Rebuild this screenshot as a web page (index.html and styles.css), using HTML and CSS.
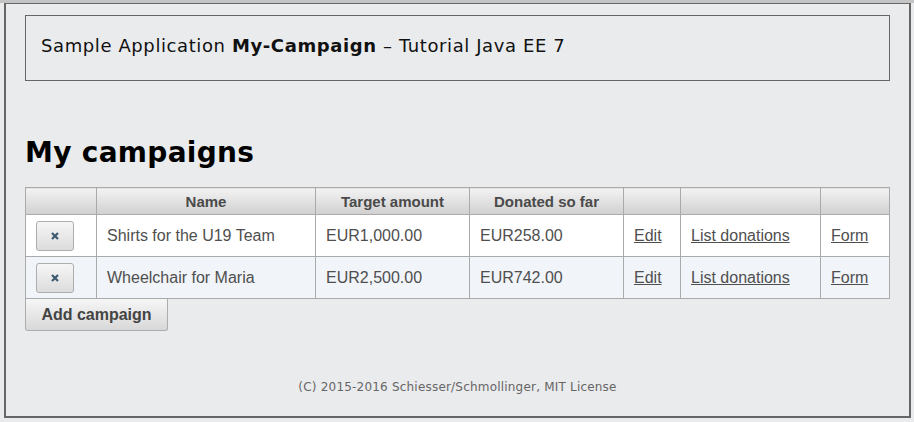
FILE: index.html
```html
<!DOCTYPE html>
<html>
<head>
<meta charset="utf-8">
<link rel="stylesheet" href="styles.css">
</head>
<body>
<div class="frame">
  <div class="header">Sample Application <b>My-Campaign</b> – Tutorial Java EE 7</div>
  <h1 class="title">My campaigns</h1>
  <table class="grid">
    <thead>
      <tr>
        <th class="c-del"></th>
        <th class="c-name">Name</th>
        <th class="c-amt">Target amount</th>
        <th class="c-don">Donated so far</th>
        <th class="c-edit"></th>
        <th class="c-list"></th>
        <th class="c-form"></th>
      </tr>
    </thead>
    <tbody>
      <tr class="odd">
        <td class="del"><button class="xbtn"><svg width="8" height="8" viewBox="0 0 8 8"><path d="M1 1 L7 7 M7 1 L1 7" stroke="#3c5a70" stroke-width="2.2"/></svg></button></td>
        <td>Shirts for the U19 Team</td>
        <td>EUR1,000.00</td>
        <td>EUR258.00</td>
        <td><a href="#">Edit</a></td>
        <td><a href="#">List donations</a></td>
        <td><a href="#">Form</a></td>
      </tr>
      <tr class="even">
        <td class="del"><button class="xbtn"><svg width="8" height="8" viewBox="0 0 8 8"><path d="M1 1 L7 7 M7 1 L1 7" stroke="#3c5a70" stroke-width="2.2"/></svg></button></td>
        <td>Wheelchair for Maria</td>
        <td>EUR2,500.00</td>
        <td>EUR742.00</td>
        <td><a href="#">Edit</a></td>
        <td><a href="#">List donations</a></td>
        <td><a href="#">Form</a></td>
      </tr>
    </tbody>
  </table>
  <button class="addbtn">Add campaign</button>
  <div class="footer">(C) 2015-2016 Schiesser/Schmollinger, MIT License</div>
</div>
</body>
</html>
```
FILE: styles.css
```css
html, body {
  margin: 0;
  padding: 0;
}
body {
  background: #eaebed;
  border-top: 3px solid #c4c4c4;
  height: 419px;
}
.frame {
  margin: 0 3px 0 4px;
  border: 2px solid #666;
  border-top-width: 1px;
  padding: 11px 19px 0 19px;
  box-sizing: border-box;
  height: 415px;
  width: 907px;
  font-family: "DejaVu Sans", sans-serif;
}
.header {
  border: 1px solid #666;
  height: 66px;
  box-sizing: border-box;
  padding: 19px 15px 0 15px;
  font-family: "DejaVu Sans", sans-serif;
  font-size: 18px;
  letter-spacing: 0.6px;
  color: #111;
}
.title {
  margin: 54px 0 0 0;
  font-family: "DejaVu Sans", sans-serif;
  font-weight: bold;
  font-size: 28px;
  letter-spacing: 0.3px;
  line-height: 36px;
  color: #000;
  height: 52px;
}
.grid {
  border-collapse: collapse;
  width: 865px;
  font-family: "Liberation Sans", Arial, sans-serif;
  font-size: 16px;
  color: #4f4f4f;
}
.grid th {
  height: 26px;
  padding: 0;
  border: 1px solid #aaa;
  background: linear-gradient(#f3f3f3, #d0d0d0);
  font-size: 15px;
  font-weight: bold;
  color: #4a4a4a;
}
.grid td {
  height: 41px;
  border: 1px solid #aaa;
  padding: 0 10px;
}
.grid tr.odd td { background: #fff; }
.grid tr.even td { background: #f1f4f9; }
.c-del { width: 70px; }
.c-name { width: 218px; }
.c-amt { width: 153px; }
.c-don { width: 153px; }
.c-edit { width: 56px; }
.c-list { width: 139px; }
.grid a { color: #4f4f4f; text-decoration: underline; }
.xbtn {
  width: 38px;
  height: 30px;
  border: 1px solid #adadad;
  border-radius: 3px;
  background: linear-gradient(#f6f6f6, #dcdcdc);
  display: flex;
  align-items: center;
  justify-content: center;
  padding: 0;
}
.addbtn {
  display: block;
  width: 143px;
  height: 32px;
  border: 1px solid #adadad;
  border-top: none;
  border-radius: 0 0 3px 3px;
  background: linear-gradient(#f6f6f6, #d8d8d8);
  font-family: "Liberation Sans", Arial, sans-serif;
  font-weight: bold;
  font-size: 16px;
  color: #444;
  padding: 0;
}
.footer {
  margin-top: 49px;
  text-align: center;
  font-family: "DejaVu Sans", sans-serif;
  font-size: 12px;
  letter-spacing: 0.2px;
  color: #666;
}
```
